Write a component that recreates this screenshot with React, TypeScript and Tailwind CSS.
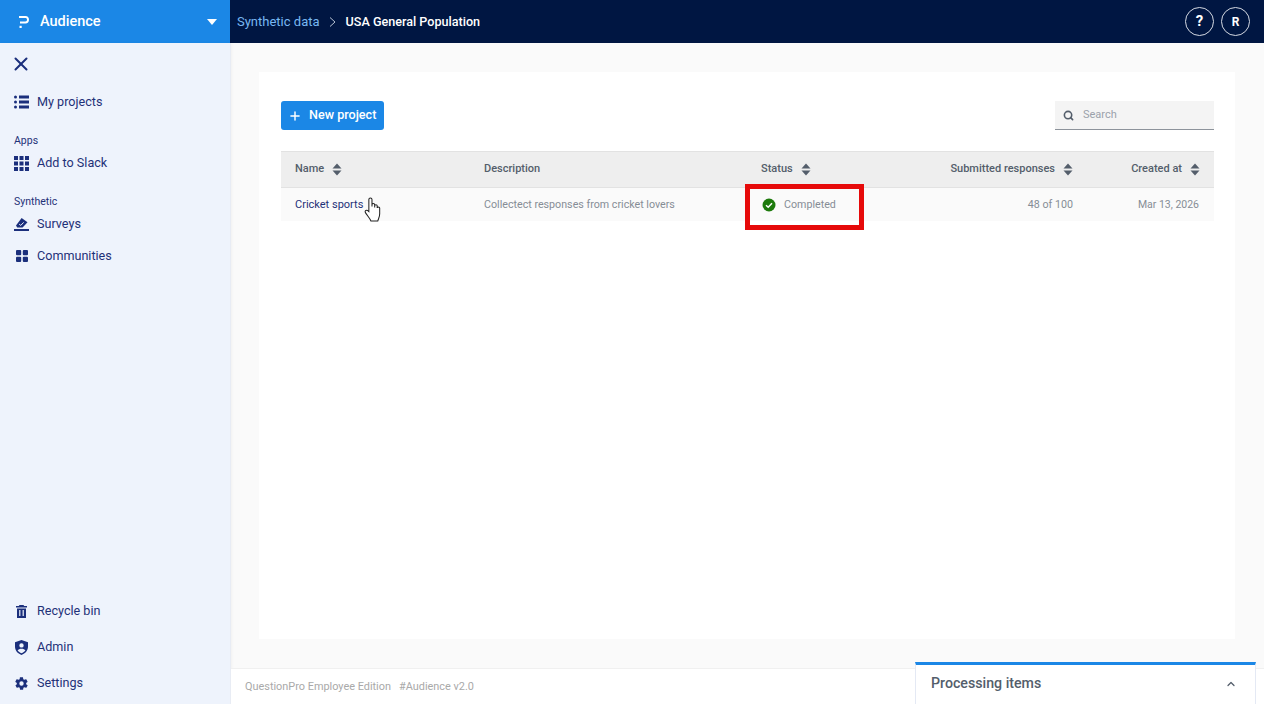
import { ChevronUp, Plus, Search, X } from "lucide-react";
import type { ReactNode } from "react";

function Sort() {
  return (
    <svg width="10" height="13" viewBox="0 0 10 13" className="shrink-0 text-[#545e6b]" fill="currentColor">
      <path d="M5 0.5 9.5 5.5H0.5Z" />
      <path d="M0.5 7.5H9.5L5 12.5Z" />
    </svg>
  );
}

function ListIcon() {
  return (
    <svg width="15" height="14" viewBox="0 0 15 14" fill="currentColor">
      <rect x="0" y="0.5" width="3" height="3" rx="1.5" />
      <rect x="0" y="5.5" width="3" height="3" rx="1.5" />
      <rect x="0" y="10.5" width="3" height="3" rx="1.5" />
      <rect x="5" y="0.5" width="10" height="3" />
      <rect x="5" y="5.5" width="10" height="3" />
      <rect x="5" y="10.5" width="10" height="3" />
    </svg>
  );
}

function AppsIcon() {
  return (
    <svg width="15" height="15" viewBox="0 0 15 15" fill="currentColor">
      {[0, 5.5, 11].map((y) =>
        [0, 5.5, 11].map((x) => <rect key={`${x}-${y}`} x={x} y={y} width="4" height="4" />)
      )}
    </svg>
  );
}

function VoteIcon() {
  return (
    <svg width="15" height="13" viewBox="0 0 15 13" fill="currentColor">
      <path d="M7.6 0 13.5 4.2 8.6 9.4H3.2L2 7.6Z" />
      <path d="M0 11h15v2H0z" />
      <path d="M5.2 6.2 6.8 7.4 9.6 4.4" stroke="#eef3fc" strokeWidth="1" fill="none" />
    </svg>
  );
}

function GridIcon() {
  return (
    <svg width="12" height="12" viewBox="0 0 12 12" fill="currentColor">
      <rect width="5.2" height="5.2" rx="1" />
      <rect x="6.8" width="5.2" height="5.2" rx="1" />
      <rect y="6.8" width="5.2" height="5.2" rx="1" />
      <rect x="6.8" y="6.8" width="5.2" height="5.2" rx="1" />
    </svg>
  );
}

function TrashIcon() {
  return (
    <svg width="11" height="13" viewBox="0 0 11 13" fill="currentColor">
      <path d="M3.5 0h4l.7 1H11v1.6H0V1h2.8Z" />
      <path fillRule="evenodd" d="M1 3.4h9V13H1ZM3.2 5v6h1.2V5Zm3.4 0v6h1.2V5Z" />
    </svg>
  );
}

function AdminIcon() {
  return (
    <svg width="13" height="15" viewBox="0 0 13 15" fill="currentColor">
      <path
        fillRule="evenodd"
        d="M6.5 0 13 2.2v4.6c0 3.6-2.6 6.8-6.5 8.2C2.6 13.6 0 10.4 0 6.8V2.2ZM6.5 3.2a2.2 2.2 0 1 0 0 4.4 2.2 2.2 0 0 0 0-4.4ZM2.6 10.4c.9 1.1 2.3 2.2 3.9 2.9 1.6-.7 3-1.8 3.9-2.9-.7-1-2.2-1.6-3.9-1.6s-3.2.6-3.9 1.6Z"
      />
    </svg>
  );
}

function GearIcon() {
  return (
    <svg width="15" height="15" viewBox="0 0 24 24" fill="currentColor">
      <path d="M19.4 13c.1-.3.1-.7.1-1s0-.7-.1-1l2.1-1.6c.2-.2.2-.4.1-.6l-2-3.5c-.1-.2-.4-.3-.6-.2l-2.5 1c-.5-.4-1.1-.7-1.7-1l-.4-2.6c0-.3-.2-.5-.5-.5h-4c-.3 0-.5.2-.5.5l-.4 2.6c-.6.3-1.2.6-1.7 1l-2.5-1c-.2-.1-.5 0-.6.2l-2 3.5c-.1.2 0 .4.1.6L4.6 11c-.1.3-.1.7-.1 1s0 .7.1 1l-2.1 1.6c-.2.2-.2.4-.1.6l2 3.5c.1.2.4.3.6.2l2.5-1c.5.4 1.1.7 1.7 1l.4 2.6c0 .3.2.5.5.5h4c.3 0 .5-.2.5-.5l.4-2.6c.6-.3 1.2-.6 1.7-1l2.5 1c.2.1.5 0 .6-.2l2-3.5c.1-.2.1-.4-.1-.6ZM12 15.5a3.5 3.5 0 1 1 0-7 3.5 3.5 0 0 1 0 7Z" />
    </svg>
  );
}

function NavItem({ icon, label, className }: { icon: ReactNode; label: string; className?: string }) {
  return (
    <div className={`flex h-[20px] items-center ${className ?? ""}`}>
      <span className="flex w-[15px] justify-center text-[#1b2f7c]">{icon}</span>
      <span className="ml-[8px] text-[12.6px] text-[#1f3178]">{label}</span>
    </div>
  );
}

function Th({ label, right }: { label: string; right?: boolean }) {
  return (
    <div className={`flex items-center gap-[8px] px-[14px] ${right ? "justify-end" : ""}`}>
      <span className="mb-[1px] text-[11px] font-medium text-[#545e6b]">{label}</span>
      {label !== "Description" && <Sort />}
    </div>
  );
}

export default function App() {
  return (
    <div className="relative flex h-[704px] w-[1264px] flex-col overflow-hidden bg-[#fafafa]" style={{ fontFamily: 'Roboto, "Noto Sans", sans-serif' }}>
      <header className="flex h-[43px] shrink-0 bg-[#001642]">
        <div className="flex w-[230px] items-center bg-[#1b87e6] pl-[19px] pr-[13px] text-white">
          <svg width="10" height="12" viewBox="0 0 10 12" fill="currentColor">
            <path d="M0 0h6.5C8.700 0 10 1.500 10 3.700S8.700 7.400 6.500 7.400H1V5.400h5.300C7.400 5.400 8 4.700 8 3.700S7.400 2 6.300 2H0Z" />
            <rect x="0.5" y="9.8" width="2.2" height="2.2" />
          </svg>
          <span className="ml-[11px] text-[14.5px] font-medium">Audience</span>
          <svg width="10" height="6" viewBox="0 0 10 6" fill="currentColor" className="ml-auto">
            <path d="M0 0h10L5 6Z" />
          </svg>
        </div>
        <div className="flex flex-1 items-center pl-[7px] pr-[14px]">
          <span className="mt-[1px] text-[13px] text-[#78b8f2]">Synthetic data</span>
          <svg width="7" height="10" viewBox="0 0 7 10" fill="none" stroke="#b7c2d2" strokeWidth="1" className="ml-[9px] mt-[1px]">
            <path d="M1 0.5 6 5 1 9.5" />
          </svg>
          <span className="ml-[10px] mt-[1px] text-[12.6px] font-medium text-white">USA General Population</span>
          <div className="ml-auto flex gap-[7px]">
            <div className="flex h-[29px] w-[29px] items-center justify-center rounded-full border border-[#d5d9e2] text-[15px] font-bold text-white">?</div>
            <div className="flex h-[29px] w-[29px] items-center justify-center rounded-full border border-[#d5d9e2] text-[12px] font-bold text-white">R</div>
          </div>
        </div>
      </header>

      <div className="flex min-h-0 flex-1">
        <aside className="flex w-[231px] shrink-0 flex-col border-r border-[#e8ecf4] bg-[#eef3fc] pb-[11px] pl-[14px] shadow-[1px_0_3px_rgba(0,0,0,0.04)]">
          <X className="-ml-[4px] mt-[10px] text-[#1b2f7c]" size={22} strokeWidth={2.2} />
          <NavItem icon={<ListIcon />} label="My projects" className="mt-[17px]" />
          <div className="mt-[22px] text-[10.5px] leading-[14px] text-[#1f3178]">Apps</div>
          <NavItem icon={<AppsIcon />} label="Add to Slack" className="mt-[5px]" />
          <div className="mt-[22px] text-[10.5px] leading-[14px] text-[#1f3178]">Synthetic</div>
          <NavItem icon={<VoteIcon />} label="Surveys" className="mt-[5px]" />
          <NavItem icon={<GridIcon />} label="Communities" className="mt-[12px]" />
          <div className="mt-auto flex flex-col gap-[16px]">
            <NavItem icon={<TrashIcon />} label="Recycle bin" />
            <NavItem icon={<AdminIcon />} label="Admin" />
            <NavItem icon={<GearIcon />} label="Settings" />
          </div>
        </aside>

        <main className="flex min-w-0 flex-1 flex-col">
          <div className="flex-1 pb-[29px] pl-[28px] pr-[29px] pt-[29px]">
            <div className="h-full bg-white pl-[22px] pr-[21px] pt-[29px]">
              <div className="flex items-start justify-between">
                <button className="flex h-[29px] w-[103px] items-center rounded-[3px] bg-[#1b87e6] pl-[7px] text-white">
                  <Plus size={14} strokeWidth={2.5} />
                  <span className="ml-[7px] text-[12.6px] font-medium">New project</span>
                </button>
                <div className="flex h-[29px] w-[159px] items-center border-b border-[#8d939b] bg-[#f4f4f4] pl-[8px]">
                  <Search size={11} strokeWidth={3.5} className="text-[#545e6b]" />
                  <span className="ml-[9px] text-[11px] text-[#9ba2ab]">Search</span>
                </div>
              </div>

              <div className="mt-[21px]">
                <div className="grid h-[37px] grid-cols-[189px_277px_130px_1fr_127px] border-y border-[#e2e2e2] bg-[#eeeeee]">
                  <Th label="Name" />
                  <Th label="Description" />
                  <Th label="Status" />
                  <Th label="Submitted responses" right />
                  <Th label="Created at" right />
                </div>
                <div className="grid h-[33px] grid-cols-[189px_277px_130px_1fr_127px] items-center bg-[#fafafa] pt-[1px] text-[10.7px] text-[#868d96]">
                  <div className="px-[14px] text-[11px] text-[#1f3178]">Cricket sports</div>
                  <div className="px-[14px]">Collectect responses from cricket lovers</div>
                  <div className="flex items-center gap-[8px] px-[15px]">
                    <svg width="14" height="14" viewBox="0 0 14 14">
                      <circle cx="7" cy="7" r="6.5" fill="#1d7a0c" />
                      <path d="M4 7.2 6.2 9.2 10 5.2" fill="none" stroke="#fff" strokeWidth="1.5" />
                    </svg>
                    <span>Completed</span>
                  </div>
                  <div className="px-[14px] text-right">48 of 100</div>
                  <div className="px-[15px] text-right text-[10.5px]">Mar 13, 2026</div>
                </div>
              </div>
            </div>
          </div>
          <footer className="flex h-[36px] shrink-0 items-center border-t border-[#f0f0f0] bg-white pl-[14px] pt-[1px] text-[10.9px] text-[#a9a9a9]">
            <span>QuestionPro Employee Edition</span>
            <span className="ml-[8px]">#Audience v2.0</span>
          </footer>
        </main>
      </div>

      {/* annotation and cursor lie over the table */}
      <div className="absolute left-[745px] top-[184px] h-[46px] w-[119px] border-[5px] border-[#e60a0a]" />
      <svg width="17" height="25" viewBox="0 0 16 24" className="absolute left-[364px] top-[197px]" fill="#fff" stroke="#222" strokeWidth="1">
        <path d="M4.5 12V2.5c0-2 3-2 3 0V9V7.5c0-1.600 2.600-1.600 2.600 0V10V8.5c0-1.500 2.400-1.500 2.400 0v2c0-1.300 2.400-1.300 2.400 0V16c0 3-1 4.500-1.800 7H6.500C5.500 20.500 3 18 1.200 15c-1-2 1-3.300 3.300-1Z" />
      </svg>

      <div className="absolute bottom-0 left-[915px] flex h-[42px] w-[341px] items-center justify-between border-x border-[#e4e9f4] border-t-[3px] border-t-[#1b87e6] bg-white pb-[2px] pl-[15px] pr-[18px]">
        <span className="text-[14.2px] font-medium text-[#545e6b]">Processing items</span>
        <ChevronUp size={12} strokeWidth={2.5} className="text-[#545e6b]" />
      </div>
    </div>
  );
}
